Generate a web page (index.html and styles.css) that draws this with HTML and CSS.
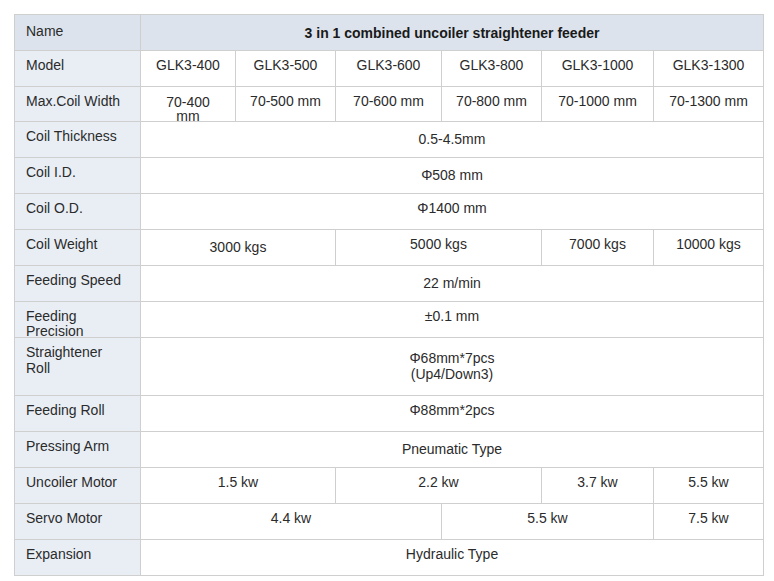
FILE: index.html
```html
<!DOCTYPE html>
<html lang="en">
<head>
<meta charset="utf-8">
<title>3 in 1 combined uncoiler straightener feeder</title>
<link rel="stylesheet" href="styles.css">
</head>
<body>
<div class="spec">
  <div class="cell lbl head-lbl">Name</div>
  <div class="cell head-val c6">3 in 1 combined uncoiler straightener feeder</div>

  <div class="cell lbl">Model</div>
  <div class="cell val">GLK3-400</div>
  <div class="cell val">GLK3-500</div>
  <div class="cell val">GLK3-600</div>
  <div class="cell val">GLK3-800</div>
  <div class="cell val">GLK3-1000</div>
  <div class="cell val">GLK3-1300</div>

  <div class="cell lbl">Max.Coil Width</div>
  <div class="cell val tight">70-400<br>mm</div>
  <div class="cell val">70-500 mm</div>
  <div class="cell val">70-600 mm</div>
  <div class="cell val">70-800 mm</div>
  <div class="cell val">70-1000 mm</div>
  <div class="cell val">70-1300 mm</div>

  <div class="cell lbl">Coil Thickness</div>
  <div class="cell val c6 low">0.5-4.5mm</div>

  <div class="cell lbl">Coil I.D.</div>
  <div class="cell val c6 low">Φ508 mm</div>

  <div class="cell lbl">Coil O.D.</div>
  <div class="cell val c6">Φ1400 mm</div>

  <div class="cell lbl">Coil Weight</div>
  <div class="cell val c2 low">3000 kgs</div>
  <div class="cell val c2">5000 kgs</div>
  <div class="cell val">7000 kgs</div>
  <div class="cell val">10000 kgs</div>

  <div class="cell lbl">Feeding Speed</div>
  <div class="cell val c6 low">22 m/min</div>

  <div class="cell lbl tight-lbl">Feeding<br>Precision</div>
  <div class="cell val c6">±0.1 mm</div>

  <div class="cell lbl">Straightener<br>Roll</div>
  <div class="cell val c6 mid">Φ68mm*7pcs<br>(Up4/Down3)</div>

  <div class="cell lbl">Feeding Roll</div>
  <div class="cell val c6">Φ88mm*2pcs</div>

  <div class="cell lbl">Pressing Arm</div>
  <div class="cell val c6 low">Pneumatic Type</div>

  <div class="cell lbl">Uncoiler Motor</div>
  <div class="cell val c2">1.5 kw</div>
  <div class="cell val c2">2.2 kw</div>
  <div class="cell val">3.7 kw</div>
  <div class="cell val">5.5 kw</div>

  <div class="cell lbl">Servo Motor</div>
  <div class="cell val c3">4.4 kw</div>
  <div class="cell val c2">5.5 kw</div>
  <div class="cell val">7.5 kw</div>

  <div class="cell lbl">Expansion</div>
  <div class="cell val c6">Hydraulic Type</div>
</div>
</body>
</html>
```
FILE: styles.css
```css
html, body {
  margin: 0;
  padding: 0;
  background: #ffffff;
}

body {
  padding: 14px 0 0 14px;
  font-family: "Liberation Sans", Arial, sans-serif;
  font-size: 14px;
  color: #333333;
}

.spec {
  display: grid;
  width: 748px;
  grid-template-columns: 125px 94px 99px 105px 99px 111px 109px;
  grid-template-rows: 35px 35px 34px 35px 35px 35px 35px 35px 35px 57px 35px 35px 35px 35px 35px;
  gap: 1px;
  padding: 1px;
  background: #cfcfcf;
}

.cell {
  background: #ffffff;
  line-height: 16px;
  padding-top: 6px;
  overflow: hidden;
  min-width: 0;
}

.lbl {
  background: #e9eef5;
  padding-left: 11px;
  padding-right: 11px;
  color: #2b2b2b;
}

.head-lbl {
  background: #dce3ec;
  padding-top: 8px;
}

.head-val {
  background: #dce3ec;
  font-weight: bold;
  text-align: center;
  padding-top: 10px;
  color: #1a1a1a;
}

.val {
  text-align: center;
  color: #2b2b2b;
}

.c2 { grid-column: span 2; }
.c3 { grid-column: span 3; }
.c6 { grid-column: span 6; }

.low { padding-top: 9px; }
.mid { padding-top: 12px; }

.tight {
  line-height: 14px;
  padding-top: 8px;
}

.tight-lbl {
  line-height: 15px;
  padding-top: 7px;
}
```
